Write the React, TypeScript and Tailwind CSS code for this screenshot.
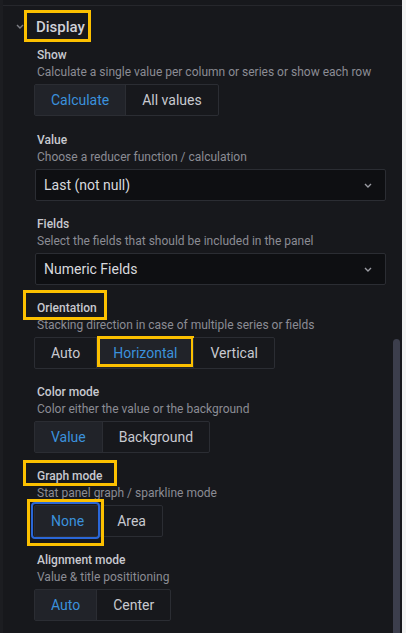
import React from 'react'
import clsx from 'clsx'

const Mark = ({ className }: { className: string }) => (
  <span className={clsx('pointer-events-none absolute border-[3px] border-[#fcc000]', className)} />
)

function Chevron({ className }: { className?: string }) {
  return (
    <svg width="8" height="5" viewBox="0 0 8 5" className={className}>
      <path d="M1 1l3 3 3-3" fill="none" stroke="currentColor" strokeWidth="1.4" />
    </svg>
  )
}

type Opt = { label: string; mark?: React.ReactNode }

function Radio({ options, active }: { options: Opt[]; active: number }) {
  return (
    <div className="inline-flex h-8 rounded-[2px] border border-[#2b2d33]">
      {options.map((o, i) => (
        <div
          key={o.label}
          className={clsx(
            'relative flex items-center px-4 text-[14px]',
            i > 0 && 'border-l border-[#2b2d33]',
            i === active ? 'bg-[#212329] text-[#3b91dc]' : 'text-[#c8c9d0]'
          )}
        >
          {o.label}
          {o.mark}
        </div>
      ))}
    </div>
  )
}

function Select({ value }: { value: string }) {
  return (
    <div className="ml-px flex h-8 w-[351px] items-center justify-between rounded-[2px] border border-[#2b2d33] bg-[#0e0f12] pl-2 pr-[13px] text-[14px] text-[#d8d9de]">
      <span>{value}</span>
      <Chevron className="text-[#9a9ba2]" />
    </div>
  )
}

function Field({
  label,
  desc,
  mark,
  children,
  className,
}: {
  label: string
  desc: string
  mark?: React.ReactNode
  children: React.ReactNode
  className?: string
}) {
  return (
    <div className={className ?? 'pb-[15px]'}>
      <div className="pl-[3px] text-[12px] font-medium leading-4 text-[#c8c9d0]">
        <span className="relative inline-block">
          {label}
          {mark}
        </span>
      </div>
      <div className="mt-px pl-[3px] text-[12px] leading-4 text-[#8b8c94]">{desc}</div>
      <div className="mt-1">{children}</div>
    </div>
  )
}

export default function App() {
  return (
    <div className="flex h-[633px] w-[406px] overflow-hidden bg-[#f3f4f4] font-['Roboto',sans-serif]">
      <div className="w-[3px] bg-[#1c1d21]" />
      <div className="relative w-[399px] bg-[#17181c]">
        <div className="h-[5px]" />
        <div className="border-t border-[#26272c]">
          <div className="flex h-[41px] items-center gap-[12px] pl-[13px]">
            <Chevron className="text-[#7d7e85]" />
            <span className="relative text-[15px] font-medium leading-5 text-[#d0d1d8]">
              Display
              <Mark className="-left-[12px] -top-[7px] h-[32px] w-[67px]" />
            </span>
          </div>

          <div className="pl-[31px]">
            <Field
              label="Show"
              desc="Calculate a single value per column or series or show each row"
              className="pb-[16px]"
            >
              <Radio options={[{ label: 'Calculate' }, { label: 'All values' }]} active={0} />
            </Field>

            <Field label="Value" desc="Choose a reducer function / calculation">
              <Select value="Last (not null)" />
            </Field>

            <Field label="Fields" desc="Select the fields that should be included in the panel">
              <Select value="Numeric Fields" />
            </Field>

            <Field
              label="Orientation"
              desc="Stacking direction in case of multiple series or fields"
              mark={<Mark className="-left-[14px] -top-[10px] h-[30px] w-[84px]" />}
            >
              <Radio
                options={[
                  { label: 'Auto' },
                  {
                    label: 'Horizontal',
                    mark: <Mark className="-top-[2px] left-0 h-[31px] w-[97px]" />,
                  },
                  { label: 'Vertical' },
                ]}
                active={1}
              />
            </Field>

            <Field label="Color mode" desc="Color either the value or the background">
              <Radio options={[{ label: 'Value' }, { label: 'Background' }]} active={0} />
            </Field>

            <Field
              label="Graph mode"
              desc="Stat panel graph / sparkline mode"
              mark={<Mark className="-left-[14px] -top-[8px] h-[26px] w-[94px]" />}
            >
              <Radio
                options={[
                  {
                    label: 'None',
                    mark: (
                      <>
                        <span className="pointer-events-none absolute -bottom-[3px] -left-[4px] -top-[4px] right-0 rounded-[4px] border-2 border-[#2a67d8]" />
                        <Mark className="-left-[8px] -top-[7px] h-[47px] w-[77px]" />
                      </>
                    ),
                  },
                  { label: 'Area' },
                ]}
                active={0}
              />
            </Field>

            <Field label="Alignment mode" desc="Value & title posititioning" className="pb-0">
              <Radio options={[{ label: 'Auto' }, { label: 'Center' }]} active={0} />
            </Field>
          </div>
        </div>

        <div className="absolute right-[2px] top-[339px] h-[320px] w-[7px] rounded-full bg-[#3c3e4c]" />
      </div>
    </div>
  )
}
